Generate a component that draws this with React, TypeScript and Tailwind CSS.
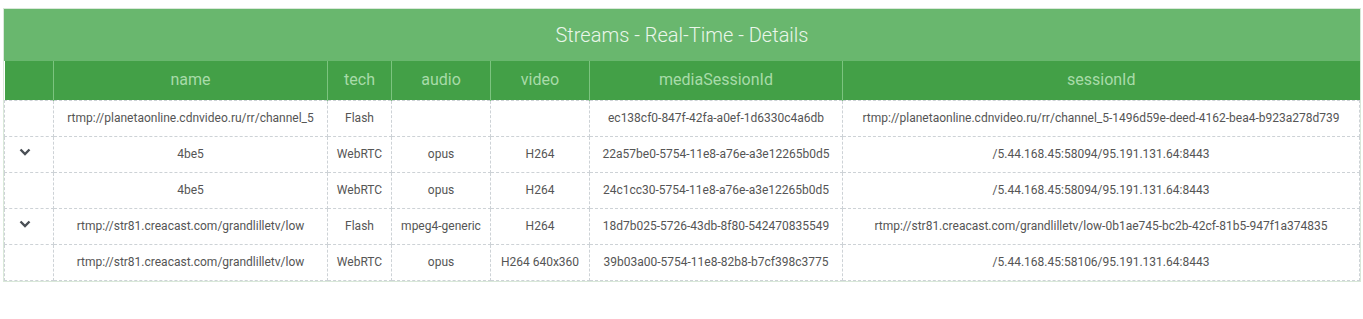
import React from "react";

type Row = {
  expandable: boolean;
  name: string;
  tech: string;
  audio: string;
  video: string;
  mediaSessionId: string;
  sessionId: string;
};

const rows: Row[] = [
  {
    expandable: false,
    name: "rtmp://planetaonline.cdnvideo.ru/rr/channel_5",
    tech: "Flash",
    audio: "",
    video: "",
    mediaSessionId: "ec138cf0-847f-42fa-a0ef-1d6330c4a6db",
    sessionId: "rtmp://planetaonline.cdnvideo.ru/rr/channel_5-1496d59e-deed-4162-bea4-b923a278d739",
  },
  {
    expandable: true,
    name: "4be5",
    tech: "WebRTC",
    audio: "opus",
    video: "H264",
    mediaSessionId: "22a57be0-5754-11e8-a76e-a3e12265b0d5",
    sessionId: "/5.44.168.45:58094/95.191.131.64:8443",
  },
  {
    expandable: false,
    name: "4be5",
    tech: "WebRTC",
    audio: "opus",
    video: "H264",
    mediaSessionId: "24c1cc30-5754-11e8-a76e-a3e12265b0d5",
    sessionId: "/5.44.168.45:58094/95.191.131.64:8443",
  },
  {
    expandable: true,
    name: "rtmp://str81.creacast.com/grandlilletv/low",
    tech: "Flash",
    audio: "mpeg4-generic",
    video: "H264",
    mediaSessionId: "18d7b025-5726-43db-8f80-542470835549",
    sessionId: "rtmp://str81.creacast.com/grandlilletv/low-0b1ae745-bc2b-42cf-81b5-947f1a374835",
  },
  {
    expandable: false,
    name: "rtmp://str81.creacast.com/grandlilletv/low",
    tech: "WebRTC",
    audio: "opus",
    video: "H264 640x360",
    mediaSessionId: "39b03a00-5754-11e8-82b8-b7cf398c3775",
    sessionId: "/5.44.168.45:58106/95.191.131.64:8443",
  },
];

const columns = ["", "name", "tech", "audio", "video", "mediaSessionId", "sessionId"];
const widths = ["w-[49px]", "w-[274px]", "w-[64px]", "w-[99px]", "w-[99px]", "w-[253px]", ""];

function Chevron() {
  return (
    <svg width="12" height="8" viewBox="0 0 12 8" className="block">
      <path d="M1.5 1.5 L6 6 L10.5 1.5" fill="none" stroke="#4a4f55" strokeWidth="2.4" />
    </svg>
  );
}

export default function App() {
  return (
    <div className="bg-white pt-[8px] px-[3px] font-['Roboto',sans-serif]">
      <div className="w-[1358px] border border-[#d9e8d9]">
        <div className="flex h-[52px] items-center justify-center bg-[#69b76e] text-[20px] font-light text-[#eaf6ea]">
          Streams - Real-Time - Details
        </div>
        <table className="w-full table-fixed border-collapse">
          <colgroup>
            {widths.map((w, i) => (
              <col key={i} className={w} />
            ))}
          </colgroup>
          <thead>
            <tr className="h-[39px] bg-[#43a047]">
              {columns.map((c, i) => (
                <th
                  key={i}
                  className="border-l border-[#7cc47f] text-[16px] font-normal text-[#a8dba9] first:border-l-0"
                >
                  {c}
                </th>
              ))}
            </tr>
          </thead>
          <tbody>
            {rows.map((r, i) => (
              <tr key={i} className="h-[36px] text-[12px] text-[#555]">
                <td className="border border-dashed border-[#cdd2d6] pl-[14px]">
                  {r.expandable ? (
                    <div className="mb-[5px]">
                      <Chevron />
                    </div>
                  ) : null}
                </td>
                <td className="border border-dashed border-[#cdd2d6] text-center">{r.name}</td>
                <td className="border border-dashed border-[#cdd2d6] text-center">{r.tech}</td>
                <td className="border border-dashed border-[#cdd2d6] text-center">{r.audio}</td>
                <td className="border border-dashed border-[#cdd2d6] text-center">{r.video}</td>
                <td className="border border-dashed border-[#cdd2d6] text-center">{r.mediaSessionId}</td>
                <td className="border border-dashed border-[#cdd2d6] text-center">{r.sessionId}</td>
              </tr>
            ))}
          </tbody>
        </table>
      </div>
    </div>
  );
}
